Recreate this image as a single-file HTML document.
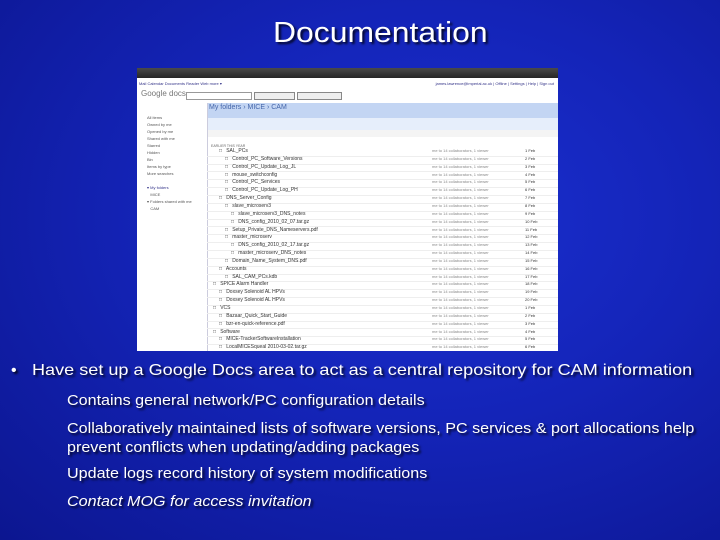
<!DOCTYPE html><html><head><meta charset="utf-8"><style>
body{margin:0;width:720px;height:540px;overflow:hidden;background:radial-gradient(ellipse at 60% 40%,#1a2fd0 0%,#1424b8 45%,#0c1690 100%);font-family:"Liberation Sans",sans-serif;position:relative}
.t{position:absolute;color:#fff;text-shadow:2px 2px 2px #000c;transform-origin:0 0;white-space:nowrap}
.s{transform:scaleX(1.075)}
.win{position:absolute;left:137px;top:68px;width:421px;height:283px;background:#fff;overflow:hidden;font-size:4px;color:#666}
.tb{height:10px;background:linear-gradient(#4a4a4a,#262626)}
.ab{position:absolute}
.row{position:absolute;left:70px;right:0;height:7.8px;border-bottom:1px solid #eee}
.row b{position:absolute;font-weight:normal;color:#333;font-size:5px}
</style></head><body>
<div class="t" style="left:273px;top:17px;font-size:29px;transform:scaleX(1.1)">Documentation</div>
<div class="win">
<div class="tb"></div>
<div class="ab" style="left:2px;top:13px;color:#338;font-size:4px">Mail Calendar Documents Reader Web more ▾</div>
<div class="ab" style="right:4px;top:13px;color:#338;font-size:4px">james.lawrence@imperial.ac.uk | Offline | Settings | Help | Sign out</div>
<div class="ab" style="left:4px;top:21px;font-size:8px;color:#777">Google docs</div>
<div class="ab" style="left:49px;top:24px;width:64px;height:6px;border:1px solid #999"></div>
<div class="ab" style="left:117px;top:24px;width:39px;height:6px;border:1px solid #888;background:#eee"></div>
<div class="ab" style="left:160px;top:24px;width:43px;height:6px;border:1px solid #888;background:#eee"></div>
<div class="ab" style="left:70px;top:35px;right:0;height:15px;background:#c3d5f3"></div>
<div class="ab" style="left:72px;top:36px;font-size:7px;color:#4466aa">My folders › MICE › CAM</div>
<div class="ab" style="left:70px;top:50px;right:0;height:12px;background:#e6eefb"></div>
<div class="ab" style="left:70px;top:62px;right:0;height:7px;background:#f4f4f4"></div>
<div class="ab" style="left:0;top:35px;width:70px;height:250px;border-right:1px solid #ccd"></div>
<div class="ab" style="left:10px;top:46px;line-height:7px;color:#555">All items<br>Owned by me<br>Opened by me<br>Shared with me<br>Starred<br>Hidden<br>Bin<br>Items by type<br>More searches<br><br><span style="color:#338">▾ My folders</span><br>&nbsp;&nbsp;&nbsp;MICE<br>▾ Folders shared with me<br>&nbsp;&nbsp;&nbsp;CAM</div>
<div class="ab" style="left:74px;top:76px;font-size:3.5px">EARLIER THIS YEAR</div>
<div id="rows"></div>
</div>
<script>
var n=["SAL_PCs","Control_PC_Software_Versions","Control_PC_Update_Log_JL","mouse_switchconfig","Control_PC_Services","Control_PC_Update_Log_PH","DNS_Server_Config","slave_microserv3","slave_microserv3_DNS_notes","DNS_config_2010_02_07.tar.gz","Setup_Private_DNS_Nameservers.pdf","master_microserv","DNS_config_2010_02_17.tar.gz","master_microserv_DNS_notes","Domain_Name_System_DNS.pdf","Accounts","SAL_CAM_PCs.kdb","SPICE Alarm Handler","Doxsey Solenoid AL HPVs","Doxsey Solenoid AL HPVs","VCS","Bazaar_Quick_Start_Guide","bzr-en-quick-reference.pdf","Software","MICE-TrackerSoftwareInstallation","LocalMICESqueal 2010-03-02.tar.gz"];
var h="";var ind=[1,2,2,2,2,2,1,2,3,3,2,2,3,3,2,1,2,0,1,1,0,1,1,0,1,1];
for(var i=0;i<n.length;i++){var y=80+i*7.85;h+='<div class="row" style="top:'+y+'px"><b style="left:'+(6+ind[i]*6)+'px">□ &nbsp; '+n[i]+'</b><b style="left:225px;color:#888;font-size:4px">me to 14 collaborators, 1 viewer</b><b style="left:318px;font-size:4px">'+(1+i%20)+' Feb</b></div>';}
document.getElementById('rows').innerHTML=h;
</script>
<div class="t" style="left:11px;top:362px;font-size:16px">•</div>
<div class="t" style="left:32px;top:362px;font-size:16px;transform:scaleX(1.13)">Have set up a Google Docs area to act as a central repository for CAM information</div>
<div class="t s" style="left:67px;top:391px;font-size:15px;line-height:19px">Contains general network/PC configuration details</div>
<div class="t s" style="left:67px;top:419px;font-size:15px;line-height:19px">Collaboratively maintained lists of software versions, PC services &amp; port allocations help<br>prevent conflicts when updating/adding packages</div>
<div class="t s" style="left:67px;top:464px;font-size:15px;line-height:19px">Update logs record history of system modifications</div>
<div class="t s" style="left:67px;top:492px;font-size:15px;line-height:19px;font-style:italic">Contact MOG for access invitation</div>
</body></html>
